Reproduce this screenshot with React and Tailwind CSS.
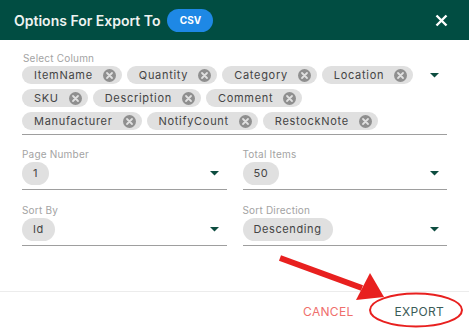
const font = { fontFamily: 'Inter, "Noto Sans", sans-serif' };

const columns = [
  ['ItemName', 'Quantity', 'Category', 'Location'],
  ['SKU', 'Description', 'Comment'],
  ['Manufacturer', 'NotifyCount', 'RestockNote'],
];

const ChipX = () => (
  <svg width="13" height="13" viewBox="0 0 13 13" className="shrink-0">
    <circle cx="6.5" cy="6.5" r="6.5" fill="#8f8f8f" />
    <path d="M4 4 L9 9 M9 4 L4 9" stroke="#e0e0e0" strokeWidth="1.8" strokeLinecap="round" />
  </svg>
);

const Caret = () => (
  <svg width="9" height="5" viewBox="0 0 9 5">
    <path d="M0 0 L9 0 L4.5 4.5 Z" fill="#0d4d40" />
  </svg>
);

const Chip = ({ label }) => (
  <span className="inline-flex h-[18px] items-center gap-[10px] rounded-full bg-[#e0e0e0] pl-[12px] pr-[6px] text-[11px] tracking-[0.7px] text-[#444]">
    {label}
    <ChipX />
  </span>
);

const SelectField = ({ label, value }) => (
  <div className="flex flex-col">
    <span className="text-[10px] leading-[12px] tracking-[0.2px] text-[#a3a3a3]">{label}</span>
    <div className="mt-[2px] flex items-center justify-between border-b border-[#9e9e9e] pb-[4px]">
      <span className="inline-flex h-[23px] items-center rounded-full bg-[#e0e0e0] px-[11px] text-[11px] tracking-[0.6px] text-[#444]">{value}</span>
      <span className="pr-[8px]">
        <Caret />
      </span>
    </div>
  </div>
);

export default function App() {
  return (
    <div className="relative h-[332px] w-[469px] overflow-hidden bg-white" style={font}>
      <div className="flex h-[40px] items-center justify-between bg-[#014d42] pl-[14px] pr-[21px]">
        <div className="flex items-center gap-[7px]">
          <span className="text-[14px] font-semibold text-[#eef3f1]">Options For Export To</span>
          <span className="inline-flex h-[23px] w-[46px] items-center justify-center rounded-full bg-[#1e88e5] text-[10px] font-bold text-white">CSV</span>
        </div>
        <svg width="13" height="13" viewBox="0 0 13 13">
          <path d="M1.5 1.5 L11.5 11.5 M11.5 1.5 L1.5 11.5" stroke="white" strokeWidth="2.4" />
        </svg>
      </div>

      <div className="px-[22px] pt-[12px]">
        <span className="block pl-[1px] text-[10px] leading-[12px] tracking-[0.2px] text-[#a3a3a3]">Select Column</span>
        <div className="flex items-start justify-between border-b border-[#9e9e9e] pb-[4px] pt-[2px]">
          <div className="flex flex-col gap-[5px]">
            {columns.map((row, i) => (
              <div key={i} className="flex gap-[5px]">
                {row.map((c) => (
                  <Chip key={c} label={c} />
                ))}
              </div>
            ))}
          </div>
          <span className="pr-[8px] pt-[7px]">
            <Caret />
          </span>
        </div>

        <div className="mt-[13px] grid grid-cols-2 gap-x-[16px] gap-y-[14px]">
          <SelectField label="Page Number" value="1" />
          <SelectField label="Total Items" value="50" />
          <SelectField label="Sort By" value="Id" />
          <SelectField label="Sort Direction" value="Descending" />
        </div>
      </div>

      <div className="absolute bottom-0 left-0 right-0 flex h-[41px] items-center justify-end gap-[41px] border-t border-[#ececec] pr-[25px]">
        <span className="text-[12px] tracking-[0.3px] text-[#ef6f6c]">CANCEL</span>
        <span className="text-[12px] tracking-[0.3px] text-[#3b5b58]">EXPORT</span>
      </div>

      <svg className="pointer-events-none absolute left-0 top-0" width="469" height="332" viewBox="0 0 469 332">
        <line x1="280" y1="258" x2="362" y2="288" stroke="#e8201f" strokeWidth="6" />
        <path d="M384 297 L356 300 L370 273 Z" fill="#e8201f" />
        <ellipse cx="416" cy="310" rx="46" ry="16.5" fill="none" stroke="#e8201f" strokeWidth="2" />
      </svg>
    </div>
  );
}
